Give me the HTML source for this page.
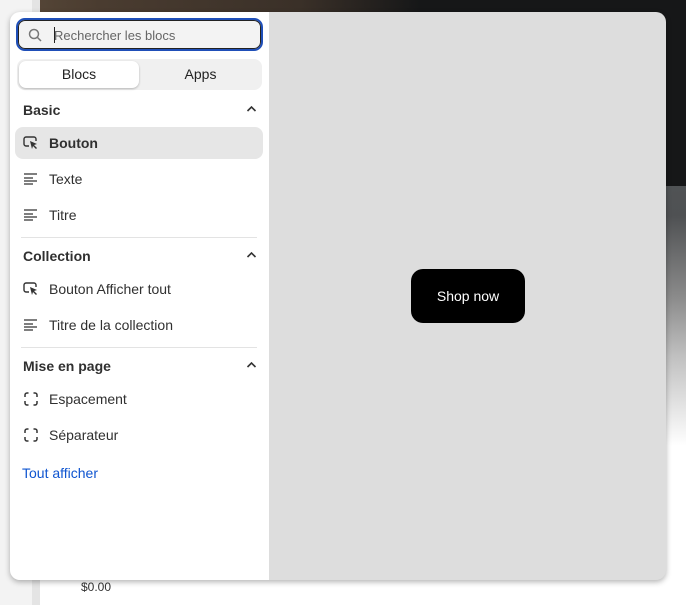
<!DOCTYPE html>
<html><head><style>
*{box-sizing:border-box;margin:0;padding:0}
body{width:686px;height:605px;position:relative;overflow:hidden;background:#fff;font-family:"Liberation Sans",sans-serif;}
.bgtop{position:absolute;left:0;top:0;width:686px;height:186px;background:linear-gradient(90deg,#5a4a3a 0,#4a3c30 100px,#3a3028 300px,#161718 420px,#161718 100%)}
.bgright{position:absolute;left:600px;top:186px;width:86px;height:260px;background:linear-gradient(#505355 0,#4f5153 30px,#8a8a8a 110px,#c0c0c0 170px,#fff 260px)}
.leftstrip{position:absolute;left:0;top:0;width:32px;height:605px;background:#f3f3f3}
.leftstrip2{position:absolute;left:32px;top:0;width:8px;height:605px;background:#e4e4e4}
.price{position:absolute;left:81px;top:580px;font-size:12px;color:#333}
.panel{position:absolute;left:10px;top:12px;width:656px;height:568px;border-radius:10px;overflow:hidden;background:#ddd;box-shadow:0 2px 6px rgba(0,0,0,.3)}
.left{position:absolute;left:0;top:0;width:259px;height:568px;background:#fff}
.search{position:absolute;left:6px;top:6px;width:247px;height:33px;border:2px solid #1f4fb8;border-radius:9px;background:#f3f3f3;box-shadow:inset 0 0 0 1px #222}
.search span{position:absolute;left:36px;top:8px;font-size:13px;color:#666}
.search i{position:absolute;left:36px;top:7px;width:1px;height:16px;background:#222}
.tabs{position:absolute;left:7px;top:47px;width:245px;height:31px;border-radius:8px;background:#f0f0f0}
.tab{position:absolute;top:2px;height:27px;font-size:14px;color:#222;text-align:center;line-height:27px}
.t1{left:2px;width:120px;background:#fff;border-radius:7px;box-shadow:0 1px 2px rgba(0,0,0,.25)}
.t2{left:124px;width:119px}
.h{position:absolute;left:13px;font-size:14px;font-weight:bold;color:#303030}
.chev{position:absolute;left:236px}
.item{position:absolute;left:5px;width:248px;height:32px;border-radius:8px;font-size:14px;color:#303030}
.item span{position:absolute;left:34px;top:8px}
.item svg{position:absolute;left:8px;top:9px}
.sel{background:#e6e6e6;font-weight:bold}
.hr{position:absolute;left:11px;width:236px;height:1px;background:#e3e3e3}
.link{position:absolute;left:12px;top:453px;font-size:14px;color:#0f55d0}
.btn{position:absolute;left:401px;top:257px;width:114px;height:54px;background:#000;border-radius:12px;color:#fff;font-size:14px;text-align:center;line-height:54px}
</style></head><body>
<div class="bgtop"></div><div class="bgright"></div>
<div class="leftstrip"></div><div class="leftstrip2"></div>
<div class="price">$0.00</div>
<div class="panel">
<div class="left">
<div class="search">
<svg style="position:absolute;left:10px;top:8px" width="15" height="15" viewBox="0 0 15 15"><circle cx="6" cy="6" r="4.5" fill="none" stroke="#777" stroke-width="1.5"/><path d="M9.5 9.5L13 13" stroke="#777" stroke-width="1.5"/></svg>
<i></i><span>Rechercher les blocs</span></div>
<div class="tabs"><div class="tab t1">Blocs</div><div class="tab t2">Apps</div></div>
<div class="h" style="top:90px">Basic</div>
<svg class="chev" style="top:93px" width="11" height="8" viewBox="0 0 11 8"><path d="M1.5 6L5.5 2L9.5 6" fill="none" stroke="#333" stroke-width="1.6"/></svg>
<div class="item sel" style="top:115px"><svg width="16" height="14" viewBox="0 0 16 14"><path d="M6 10H3a2 2 0 0 1-2-2V3a2 2 0 0 1 2-2h8a2 2 0 0 1 2 2v2" fill="none" stroke="#333" stroke-width="1.4"/><path d="M7 5l7 3-3 1 3 3-1 1-3-3-1 3z" fill="#333"/></svg><span>Bouton</span></div>
<div class="item" style="top:151px"><svg width="16" height="14" viewBox="0 0 16 14"><path d="M1 2h13M1 6h9M1 9h13M1 12h9" stroke="#333" stroke-width="1.3"/></svg><span>Texte</span></div>
<div class="item" style="top:187px"><svg width="16" height="14" viewBox="0 0 16 14"><path d="M1 2h13M1 6h9M1 9h13M1 12h9" stroke="#333" stroke-width="1.3"/></svg><span>Titre</span></div>
<div class="hr" style="top:225px"></div>
<div class="h" style="top:236px">Collection</div>
<svg class="chev" style="top:239px" width="11" height="8" viewBox="0 0 11 8"><path d="M1.5 6L5.5 2L9.5 6" fill="none" stroke="#333" stroke-width="1.6"/></svg>
<div class="item" style="top:261px"><svg width="16" height="14" viewBox="0 0 16 14"><path d="M6 10H3a2 2 0 0 1-2-2V3a2 2 0 0 1 2-2h8a2 2 0 0 1 2 2v2" fill="none" stroke="#333" stroke-width="1.4"/><path d="M7 5l7 3-3 1 3 3-1 1-3-3-1 3z" fill="#333"/></svg><span>Bouton Afficher tout</span></div>
<div class="item" style="top:297px"><svg width="16" height="14" viewBox="0 0 16 14"><path d="M1 2h13M1 6h9M1 9h13M1 12h9" stroke="#333" stroke-width="1.3"/></svg><span>Titre de la collection</span></div>
<div class="hr" style="top:335px"></div>
<div class="h" style="top:346px">Mise en page</div>
<svg class="chev" style="top:349px" width="11" height="8" viewBox="0 0 11 8"><path d="M1.5 6L5.5 2L9.5 6" fill="none" stroke="#333" stroke-width="1.6"/></svg>
<div class="item" style="top:371px"><svg width="16" height="14" viewBox="0 0 16 14"><path d="M2 5V3a2 2 0 0 1 2-2h1.5M10.5 1H12a2 2 0 0 1 2 2v2M14 9v2a2 2 0 0 1-2 2h-1.5M5.5 13H4a2 2 0 0 1-2-2V9" fill="none" stroke="#333" stroke-width="1.5"/></svg><span>Espacement</span></div>
<div class="item" style="top:407px"><svg width="16" height="14" viewBox="0 0 16 14"><path d="M2 5V3a2 2 0 0 1 2-2h1.5M10.5 1H12a2 2 0 0 1 2 2v2M14 9v2a2 2 0 0 1-2 2h-1.5M5.5 13H4a2 2 0 0 1-2-2V9" fill="none" stroke="#333" stroke-width="1.5"/></svg><span>Séparateur</span></div>
<div class="link">Tout afficher</div>
</div>
<div class="btn">Shop now</div>
</div>
</body></html>
